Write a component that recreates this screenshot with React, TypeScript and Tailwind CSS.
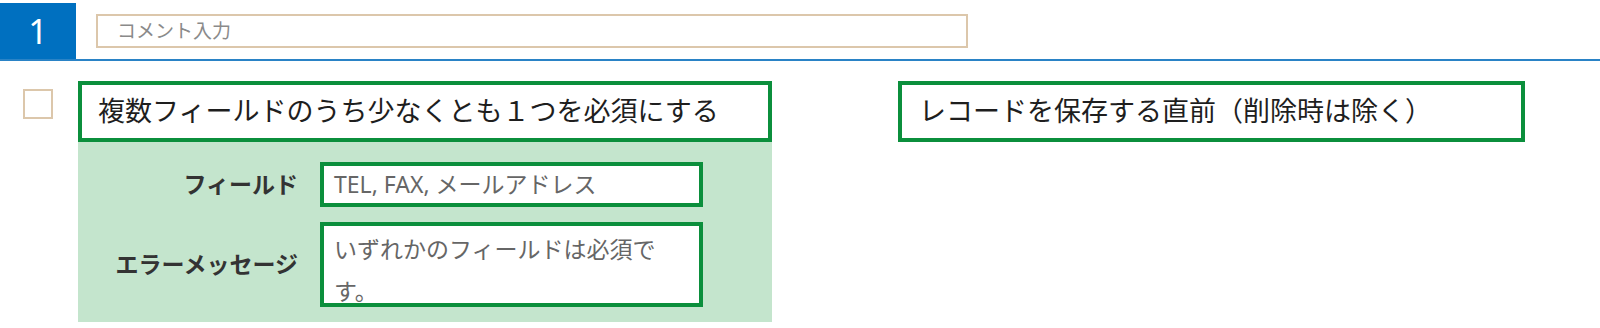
import React from 'react';

const font = "[font-family:'Noto_Sans','Noto_Sans_CJK_JP',sans-serif]";

const App: React.FC = () => {
  return (
    <div className={`w-[1600px] h-[328px] bg-white overflow-hidden ${font}`}>
      {/* header row */}
      <div className="pt-[3px] flex border-b-2 border-[#2a83c6]">
        <div className="w-[76px] h-[56px] bg-[#0070c0] flex items-center justify-center text-white text-[34px] leading-none">
          1
        </div>
        <div className="ml-[20px] mt-[11px] w-[872px] h-[34px] border-2 border-[#dcc7ab] flex items-center pl-[19px] text-[19px] text-[#8a8a8a]">
          コメント入力
        </div>
      </div>

      <div className="flex">
        <div className="ml-[23px] mt-[28px] w-[30px] h-[30px] border-2 border-[#dcc7ab] bg-white shrink-0" />

        <div className="ml-[25px] mt-[20px] w-[694px] shrink-0">
          <div className="h-[61px] border-4 border-[#0b8f3c] bg-white flex items-center pl-[16px] text-[27px] text-[#1e1e1e]">
            複数フィールドのうち少なくとも１つを必須にする
          </div>
          <div className="bg-[#c4e5cd] pt-[20px] pb-[15px]">
            <Row label="フィールド">
              <div className="h-[45px] border-4 border-[#0b8f3c] bg-white flex items-center pl-[10px] text-[23px] text-[#666]">
                TEL, FAX, メールアドレス
              </div>
            </Row>
            <Row label="エラーメッセージ" className="mt-[15px]">
              <div className="h-[85px] border-4 border-[#0b8f3c] bg-white pl-[10px] pt-[2px] text-[23px] leading-[42px] text-[#666]">
                いずれかのフィールドは必須で
                <br />
                す。
              </div>
            </Row>
          </div>
        </div>

        <div className="ml-[126px] mt-[20px] w-[627px] h-[61px] border-4 border-[#0b8f3c] bg-white flex items-center pl-[17px] text-[27px] text-[#1e1e1e] shrink-0">
          レコードを保存する直前（削除時は除く）
        </div>
      </div>
    </div>
  );
};

const Row: React.FC<{ label: string; className?: string; children: React.ReactNode }> = ({ label, className, children }) => (
  <div className={`flex items-center ${className || ''}`}>
    <div className="w-[242px] pr-[22px] text-right text-[23px] font-bold text-[#333]">{label}</div>
    <div className="w-[383px]">{children}</div>
  </div>
);

export default App;
